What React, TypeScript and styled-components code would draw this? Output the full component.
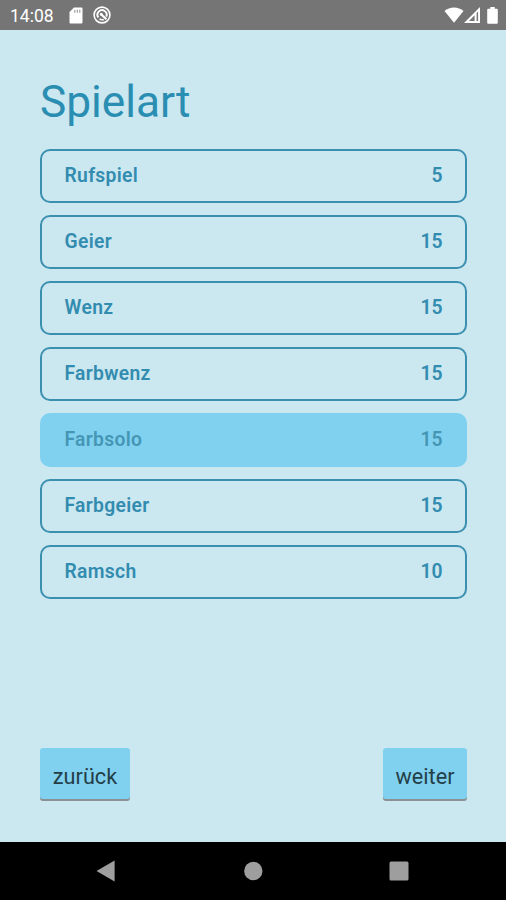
import React from 'react';
import styled, { createGlobalStyle } from 'styled-components';

const GlobalStyle = createGlobalStyle`
  * { box-sizing: border-box; }
  html, body { margin: 0; padding: 0; }
  body { font-family: Roboto, "Noto Sans", sans-serif; background: #cbe7f0; overflow: hidden; }
`;

const Screen = styled.div`
  width: 506px;
  height: 900px;
  display: flex;
  flex-direction: column;
  background: #cbe7f0;
`;

const StatusBar = styled.header`
  height: 30px;
  flex: none;
  display: flex;
  align-items: center;
  justify-content: space-between;
  padding: 0 8px 0 10px;
  background: #757575;
  color: #fff;
`;

const StatusGroup = styled.div<{ $gap: number }>`
  display: flex;
  align-items: center;
  gap: ${(p) => p.$gap}px;
  svg { display: block; }
`;

const Clock = styled.span`
  width: 44px;
  margin-right: 5px;
  padding-top: 1px;
  font-size: 17.5px;
  line-height: 28px;
  white-space: nowrap;
`;

const Spacer = styled.span`
  width: 7px;
`;

const Content = styled.main`
  flex: 1;
  display: flex;
  flex-direction: column;
  padding: 42px 39px 41px 40px;
`;

const Title = styled.h1`
  margin: 0 0 17px;
  height: 60px;
  line-height: 60px;
  font-size: 44.2px;
  font-weight: 400;
  color: #2a8db2;
`;

const GameList = styled.ul`
  list-style: none;
  margin: 0;
  padding: 0;
  display: flex;
  flex-direction: column;
  gap: 12px;
`;

const GameRow = styled.li<{ $selected: boolean }>`
  height: 54px;
  display: flex;
  align-items: center;
  justify-content: space-between;
  padding: 0 22.5px 1px;
  border: 2px solid ${(p) => (p.$selected ? '#80d1ef' : '#3c90af')};
  border-radius: 10px;
  background: ${(p) => (p.$selected ? '#80d1ef' : 'transparent')};
  color: ${(p) => (p.$selected ? '#4596b5' : '#328caf')};
  font-size: 19.3px;
  line-height: 23px;
  font-weight: 600;
`;

const GameName = styled.span`
  letter-spacing: 0.33px;
`;

const Actions = styled.div`
  margin-top: auto;
  display: flex;
  justify-content: space-between;
`;

const ActionButton = styled.button<{ $width: number }>`
  width: ${(p) => p.$width}px;
  height: 51px;
  padding: 5px 0 0;
  border: 0;
  border-radius: 3px;
  background: #80d1ef;
  box-shadow: 0 2px 0 #8b9193;
  color: #243e48;
  font: 400 21.7px Roboto, sans-serif;
  margin-bottom: 2px;
`;

const NavBar = styled.nav`
  height: 58px;
  flex: none;
  display: flex;
  align-items: center;
  justify-content: space-between;
  padding: 0 97px 0 96px;
  background: #000;
  svg { display: block; }
`;

const games = [
  { name: 'Rufspiel', value: 5 },
  { name: 'Geier', value: 15 },
  { name: 'Wenz', value: 15 },
  { name: 'Farbwenz', value: 15 },
  { name: 'Farbsolo', value: 15 },
  { name: 'Farbgeier', value: 15 },
  { name: 'Ramsch', value: 10 },
];

const SdCardIcon = () => (
  <svg width="14" height="17" viewBox="0 0 14 17">
    <path fill="#fff" d="M5 .5h7.200c.8 0 1.300.5 1.300 1.300v13.400c0 .8-.5 1.300-1.300 1.300H1.800C1 16.500.5 16 .5 15.200V5z" />
    <path stroke="#999" strokeWidth="1.100" d="M5.800 2.800v3M8.300 2.800v3M10.800 2.800v3" />
  </svg>
);

const SyncOffIcon = () => (
  <svg width="18" height="18" viewBox="0 0 18 18" fill="none" stroke="#fff">
    <circle cx="9" cy="9" r="7.900" strokeWidth="1.600" />
    <path strokeWidth="1.900" d="M5.400 11.500A4.600 4.600 0 1 1 13.200 10.700" />
    <path strokeWidth="1.600" d="M6.500 12.900A4.800 4.800 0 0 0 10.800 13.500" />
    <path strokeWidth="2.200" d="M7.800 8 13.400 13.300" />
    <circle cx="8.300" cy="8.300" r="1.500" fill="#fff" stroke="none" />
  </svg>
);

const WifiIcon = () => (
  <svg width="20" height="16" viewBox="0 0 19 16">
    <path fill="#fff" d="M0 4C5-.8 14-.8 19 4L9.500 15.700z" />
  </svg>
);

const SignalIcon = () => (
  <svg width="16" height="16" viewBox="0 0 16 16">
    <path fill="#fff" fillRule="evenodd" d="M16 0v16H0zM10.600 8.200 5 13.900h5.600zM12.600 6v7.900h1.500V4.500z" />
  </svg>
);

const BatteryIcon = () => (
  <svg width="11" height="17" viewBox="0 0 11 17">
    <path fill="#fff" d="M3.300 0h4.400v1.700H9.500c.8 0 1.300.5 1.300 1.300v12.500c0 .8-.5 1.300-1.300 1.300h-8c-.8 0-1.300-.5-1.300-1.300V3c0-.8.5-1.300 1.300-1.300h1.800z" />
  </svg>
);

const BackIcon = () => (
  <svg width="19" height="22" viewBox="0 0 19 22">
    <path fill="#9e9e9e" d="M18.600.5v21L.5 11z" />
  </svg>
);

const HomeIcon = () => (
  <svg width="22" height="20" viewBox="0 0 22 20">
    <circle cx="12.300" cy="10" r="9.200" fill="#9e9e9e" />
  </svg>
);

const RecentsIcon = () => (
  <svg width="20" height="20" viewBox="0 0 20 20">
    <rect x=".5" y=".5" width="19" height="19" rx="1.500" fill="#9e9e9e" />
  </svg>
);

export default function App() {
  return (
    <>
      <GlobalStyle />
      <Screen>
        <StatusBar>
          <StatusGroup $gap={10}>
            <Clock>14:08</Clock>
            <SdCardIcon />
            <SyncOffIcon />
          </StatusGroup>
          <StatusGroup $gap={0}>
            <WifiIcon />
            <SignalIcon />
            <Spacer />
            <BatteryIcon />
          </StatusGroup>
        </StatusBar>
        <Content>
          <Title>Spielart</Title>
          <GameList>
            {games.map((game) => (
              <GameRow key={game.name} $selected={game.name === 'Farbsolo'}>
                <GameName>{game.name}</GameName>
                <span>{game.value}</span>
              </GameRow>
            ))}
          </GameList>
          <Actions>
            <ActionButton $width={90}>zurück</ActionButton>
            <ActionButton $width={84}>weiter</ActionButton>
          </Actions>
        </Content>
        <NavBar>
          <BackIcon />
          <HomeIcon />
          <RecentsIcon />
        </NavBar>
      </Screen>
    </>
  );
}
